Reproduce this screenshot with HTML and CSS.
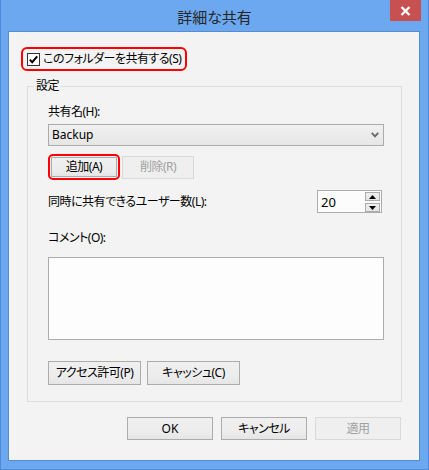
FILE: index.html
```html
<!DOCTYPE html>
<html lang="ja">
<head>
<meta charset="utf-8">
<title>詳細な共有</title>
<link rel="stylesheet" href="styles.css">
</head>
<body>
<div class="window">
  <div class="titlebar">
    <div class="title">詳細な共有</div>
    <div class="close">
      <svg width="11" height="10" viewBox="0 0 11 10"><path d="M1.5 1 L9.5 9 M9.5 1 L1.5 9" stroke="#fff" stroke-width="2.4" fill="none"/></svg>
    </div>
  </div>
  <div class="client">
    <div class="hl share">
      <span class="checkbox">
        <svg width="13" height="13" viewBox="0 0 13 13"><rect x="0.5" y="0.5" width="12" height="12" fill="#fff" stroke="#333"/><path d="M2.8 6.6 L5.2 9.2 L10.2 3.4" stroke="#000" stroke-width="2" fill="none"/></svg>
      </span>
      <span>このフォルダーを共有する(S)</span>
    </div>
    <fieldset class="group">
      <legend>設定</legend>
      <div class="group-body">
        <div class="label">共有名(H):</div>
        <div class="select">
          <span class="latin">Backup</span>
          <svg width="8" height="6" viewBox="0 0 8 6"><path d="M0.8 0.8 L4 4.4 L7.2 0.8" stroke="#666" stroke-width="1.8" fill="none"/></svg>
        </div>
        <div class="row share-btns">
          <div class="hl hl-btn"><div class="btn add">追加(A)</div></div>
          <div class="btn small disabled">削除(R)</div>
        </div>
        <div class="row users">
          <span>同時に共有できるユーザー数(L):</span>
          <div class="spin">
            <span class="spin-val">20</span>
            <div class="spin-btns">
              <span class="sb"><svg width="7" height="4" viewBox="0 0 7 4"><path d="M3.5 0 L7 4 L0 4 Z" fill="#000"/></svg></span>
              <span class="sb"><svg width="7" height="4" viewBox="0 0 7 4"><path d="M0 0 L7 0 L3.5 4 Z" fill="#000"/></svg></span>
            </div>
          </div>
        </div>
        <div class="label comment-label">コメント(O):</div>
        <div class="textarea"></div>
        <div class="row perm">
          <div class="btn wide">アクセス許可(P)</div>
          <div class="btn wide">キャッシュ(C)</div>
        </div>
      </div>
    </fieldset>
    <div class="footer">
      <div class="btn dlg latin">OK</div>
      <div class="btn dlg">キャンセル</div>
      <div class="btn dlg disabled">適用</div>
    </div>
  </div>
</div>
</body>
</html>
```
FILE: styles.css
```css
* { box-sizing: border-box; }
html, body { margin: 0; padding: 0; }
body {
  width: 429px;
  height: 470px;
  font-family: "Noto Sans", "Noto Sans CJK JP", sans-serif;
  font-size: 12px;
  line-height: 16px;
  letter-spacing: -0.5px;
  color: #000;
  font-feature-settings: "palt";
  background: #6ba8f0;
}
.latin { letter-spacing: 0; }
.window {
  width: 429px;
  height: 470px;
  background: #6ba8f0;
  border: 1px solid #4f8ad8;
  border-top: 0;
  padding: 0 8px 8px 7px;
  display: flex;
  flex-direction: column;
}
.titlebar {
  height: 31px;
  flex: none;
  display: grid;
  grid-template-columns: 1fr auto 1fr;
  margin-right: -1px;
}
.title {
  grid-column: 2;
  align-self: center;
  font-size: 15px;
  line-height: 20px;
  letter-spacing: 0;
  padding-top: 3px;
  color: #262626;
}
.close {
  grid-column: 3;
  justify-self: end;
  align-self: start;
  width: 31px;
  height: 21px;
  background: #c75050;
  display: flex;
  align-items: center;
  justify-content: center;
}
.client {
  flex: 1;
  background: #f3f3f3;
  border: 1px solid #5a8bd0;
  padding: 15px 17px 0 12px;
  display: flex;
  flex-direction: column;
}
.hl {
  border: 2px solid #ff0000;
  border-radius: 6px;
}
.share {
  align-self: flex-start;
  height: 24px;
  display: flex;
  align-items: center;
  gap: 3px;
  padding: 0 4px 0 4px;
}
.checkbox { display: flex; }
.group {
  margin: 7px 0 0 6px;
  border: 1px solid #dcdcdc;
  padding: 10px 17px 16px 6px;
  min-width: 0;
}
.group legend {
  padding: 0 2px;
  font-size: 12px;
  line-height: 16px;
}
.group-body {
  padding-left: 14px;
  display: flex;
  flex-direction: column;
}
.label { height: 16px; }
.select {
  margin-top: 4px;
  height: 22px;
  border: 1px solid #acacac;
  background: linear-gradient(#f0f0f0, #e6e6e6);
  display: flex;
  align-items: center;
  justify-content: space-between;
  padding: 0 4px 0 3px;
}
.row { display: flex; align-items: center; }
.share-btns {
  margin-top: 8px;
  height: 26px;
  gap: 2px;
}
.hl-btn {
  width: 72px;
  height: 26px;
  padding: 1px;
  border-radius: 5px;
}
.btn {
  border: 1px solid #acacac;
  background: linear-gradient(#f0f0f0 0%, #ececec 70%, #e5e5e5 100%);
  display: flex;
  align-items: center;
  justify-content: center;
  white-space: nowrap;
}
.btn.add { width: 100%; height: 100%; }
.btn.small { width: 72px; height: 23px; }
.btn.disabled {
  border-color: #d9d9d9;
  background: #efefef;
  color: #a0a0a0;
}
.users {
  margin-top: 10px;
  justify-content: space-between;
}
.spin {
  width: 65px;
  height: 23px;
  margin-right: 2px;
  border: 1px solid #acacac;
  background: #fcfcfc;
  display: flex;
  justify-content: space-between;
  padding: 1px 1px 0 3px;
}
.spin-val { font-size: 13px; line-height: 20px; letter-spacing: 0; color: #000; }
.spin-btns { display: flex; flex-direction: column; gap: 2px; }
.sb {
  width: 15px;
  height: 9px;
  border: 1px solid #acacac;
  background: linear-gradient(#f0f0f0, #e5e5e5);
  display: flex;
  align-items: center;
  justify-content: center;
}
.comment-label { margin-top: 17px; }
.textarea {
  margin-top: 11px;
  height: 83px;
  border: 1px solid #acacac;
  background: #fdfdfd;
}
.perm {
  margin-top: 21px;
  gap: 6px;
}
.btn.wide { width: 93px; height: 24px; }
.footer {
  margin-top: 15px;
  display: flex;
  justify-content: flex-end;
  gap: 8px;
  padding-right: 1px;
}
.btn.dlg { width: 86px; height: 23px; }
```
